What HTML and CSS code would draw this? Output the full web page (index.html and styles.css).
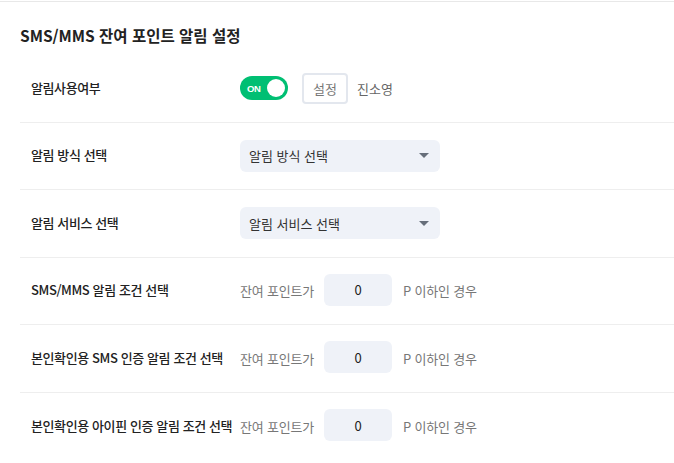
FILE: index.html
```html
<!DOCTYPE html>
<html lang="ko">
<head>
<meta charset="utf-8">
<link rel="stylesheet" href="styles.css">
</head>
<body>
<div class="page">
  <h2 class="title">SMS/MMS 잔여 포인트 알림 설정</h2>
  <div class="rows">
    <div class="row">
      <div class="label">알림사용여부</div>
      <div class="control">
        <span class="toggle"><span class="toggle-text">ON</span><span class="knob"></span></span>
        <button class="btn">설정</button>
        <span class="name">진소영</span>
      </div>
    </div>
    <div class="row">
      <div class="label">알림 방식 선택</div>
      <div class="control">
        <div class="select"><span>알림 방식 선택</span><span class="caret"></span></div>
      </div>
    </div>
    <div class="row">
      <div class="label">알림 서비스 선택</div>
      <div class="control">
        <div class="select"><span>알림 서비스 선택</span><span class="caret"></span></div>
      </div>
    </div>
    <div class="row">
      <div class="label">SMS/MMS 알림 조건 선택</div>
      <div class="control">
        <span class="muted">잔여 포인트가</span>
        <div class="num">0</div>
        <span class="muted">P 이하인 경우</span>
      </div>
    </div>
    <div class="row">
      <div class="label">본인확인용 SMS 인증 알림 조건 선택</div>
      <div class="control">
        <span class="muted">잔여 포인트가</span>
        <div class="num">0</div>
        <span class="muted">P 이하인 경우</span>
      </div>
    </div>
    <div class="row last">
      <div class="label">본인확인용 아이핀 인증 알림 조건 선택</div>
      <div class="control">
        <span class="muted">잔여 포인트가</span>
        <div class="num">0</div>
        <span class="muted">P 이하인 경우</span>
      </div>
    </div>
  </div>
</div>
</body>
</html>
```
FILE: styles.css
```css
* { box-sizing: border-box; }
html, body { margin: 0; padding: 0; background: #fff; }
body {
  font-family: "Noto Sans CJK KR", "Noto Sans", sans-serif;
  color: #222;
  font-size: 13px;
}
.page {
  margin-top: 1px;
  border-top: 1px solid #e8e8e8;
  padding: 22px 0 0 20px;
}
.title {
  margin: 0 0 9px;
  font-size: 15.5px;
  line-height: 22px;
  font-weight: 700;
  color: #222;
}
.row {
  display: flex;
  align-items: center;
  height: 67.5px;
  padding-left: 11px;
  border-bottom: 1px solid #eeeeee;
}
.row.last { border-bottom: none; }
.label {
  width: 209px;
  flex: none;
  font-weight: 500;
  color: #222;
  white-space: nowrap;
  letter-spacing: -0.4px;
  margin-top: -2px;
}
.control {
  display: flex;
  align-items: center;
}
.toggle {
  position: relative;
  width: 48px;
  height: 24px;
  border-radius: 12px;
  background: #00bf73;
  display: flex;
  align-items: center;
}
.toggle-text {
  color: #fff;
  font-family: "Liberation Sans", sans-serif;
  font-weight: 700;
  font-size: 9.5px;
  margin-left: 7px;
  letter-spacing: -0.3px;
}
.knob {
  position: absolute;
  right: 3px;
  top: 3px;
  width: 18px;
  height: 18px;
  border-radius: 50%;
  background: #fff;
}
.btn {
  margin-left: 14px;
  width: 46px;
  height: 31px;
  border: 2px solid #e3e7ee;
  border-radius: 4px;
  background: #fff;
  color: #777;
  font-family: inherit;
  font-size: 13px;
  padding: 0;
}
.name {
  margin-left: 9px;
  color: #666;
}
.select {
  width: 200px;
  height: 32px;
  border-radius: 6px;
  background: #eff2f8;
  display: flex;
  align-items: center;
  justify-content: space-between;
  padding: 0 11px 0 9px;
  color: #333;
}
.caret {
  width: 0;
  height: 0;
  border-left: 5px solid transparent;
  border-right: 5px solid transparent;
  border-top: 5px solid #666e7a;
}
.muted { color: #777; letter-spacing: -0.2px; }
.num {
  margin: -2px 11px 0 10px;
  width: 68px;
  height: 32px;
  border-radius: 6px;
  background: #eff2f8;
  display: flex;
  align-items: center;
  justify-content: center;
  color: #222;
}
```
